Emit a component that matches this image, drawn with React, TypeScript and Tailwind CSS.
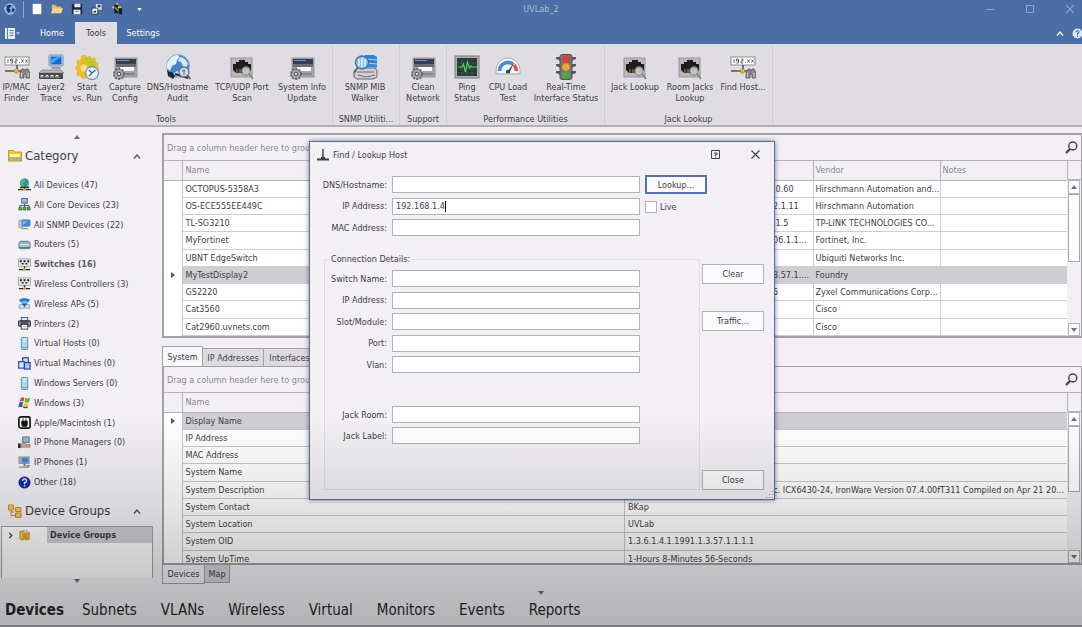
import React from 'react';

const BoxIcon = ({ children, className = 'w-[26px] h-[26px]' }: { children: React.ReactNode; className?: string }) => (
  <svg viewBox="0 0 26 26" className={`shrink-0 ${className}`} fill="none" aria-hidden="true">
    {children}
  </svg>
);

const SmallIcon = ({ children, className = 'w-[13px] h-[13px]' }: { children: React.ReactNode; className?: string }) => (
  <svg viewBox="0 0 14 14" className={`shrink-0 ${className}`} fill="none" aria-hidden="true">
    {children}
  </svg>
);

/* Ribbon icons */

const FinderIcon = () => (
  <BoxIcon>
    <rect x="1" y="3" width="24" height="8" fill="#fff" stroke="#8b898f" />
    <path d="M4 5v4M6.500 9h2v-4h-2v2h2M11 5h2v2h-2v2h2M15 8.500h1M17.500 5.500l2 3M19.500 5.500l-2 3M21.500 5.500l2 3M23.500 5.500l-2 3" stroke="#444" strokeWidth="0.800" />
    <path d="M13 11v5M1 17h18" stroke="#55535a" strokeWidth="1.600" />
    <circle cx="12.500" cy="17" r="2.200" fill="#f0b929" stroke="#a07818" strokeWidth="0.600" />
    <path d="M16 24v-5l2-4h2l1 2 1-2h2l2 4v5h-4v-4h-2v4z" fill="#8b898f" stroke="#55535a" strokeWidth="0.800" />
    <path d="M17.500 19v4M24 19v4" stroke="#d5d3d8" />
  </BoxIcon>
);

const LayerIcon = () => (
  <BoxIcon>
    <rect x="11" y="1" width="14" height="11" rx="1" fill="#cfd8e6" stroke="#7e8ca5" />
    <rect x="12.500" y="2.500" width="11" height="8" fill="#1168d8" />
    <path d="M12.500 10.500v-5l8-3h3z" fill="#49a2f8" />
    <path d="M14 13h8l1 2h-10z" fill="#9a9ba2" />
    <path d="M4 16h19l3 3H1z" fill="#b9b7bd" stroke="#706e75" strokeWidth="0.600" />
    <rect x="1" y="19" width="24" height="6" fill="#4b4a50" />
    <path d="M3 23.500v-2h2v2M8 23.500v-2h2v2M13 23.500v-2h2v2M18 23.500v-2h2v2" stroke="#f3f3f3" />
  </BoxIcon>
);

const StartIcon = () => (
  <BoxIcon>
    <path d="M11 1l2 3 3-2 1 3 4-1v4l3 1-1 4 2 3-3 2v3l-4 1-2 3-3-2-4 2-2-3-4-1 1-4-3-3 3-3-1-4 4-1 1-4z" fill="#f5bc1d" stroke="#dca017" strokeWidth="0.600" />
    <path d="M12 2l2 3 3-1 1 3 4 0-2 5-9 1-3-4z" fill="#a9c934" opacity="0.750" />
    <circle cx="10" cy="14" r="3.500" fill="#fbe08a" />
    <circle cx="18" cy="19" r="6.500" fill="#e9f1f8" stroke="#7793b2" strokeWidth="1.300" />
    <path d="M15 16l3 3 3.500-3M18 19l-3 3" stroke="#38588b" strokeWidth="1.100" />
  </BoxIcon>
);

const ConfigIcon = () => (
  <BoxIcon>
    <rect x="3" y="4" width="22" height="19" fill="#a5a4aa" stroke="#97959c" />
    <rect x="4" y="5" width="20" height="5" fill="#36404f" />
    <path d="M5 6.500h12" stroke="#5e93d8" />
    <rect x="4" y="10" width="20" height="3" fill="#6b6d76" />
    <rect x="8" y="13" width="14" height="4" fill="#f8f8fa" />
    <path d="M5 20h18" stroke="#7b7a81" strokeWidth="1.500" />
    <circle cx="7" cy="20" r="5" fill="#8e8d93" stroke="#67666c" strokeWidth="2" strokeDasharray="2 1.200" />
    <circle cx="7" cy="20" r="4" fill="#a7a6ac" />
    <circle cx="7" cy="20" r="1.800" fill="#e1dfe4" stroke="#4e4d53" />
  </BoxIcon>
);

const GlobeAuditIcon = () => (
  <BoxIcon>
    <circle cx="13" cy="12" r="11.500" fill="#3f86cf" stroke="#98b4d2" />
    <path d="M4 6q3-5 9-5 3 2-1 5l-1 4-4 2-2 5-3-3q-1-5 2-8z" fill="#e4eef7" />
    <path d="M15 3q6 1 8 7l-2 4-3-2-2-4-3-1z" fill="#d6e7f5" />
    <path d="M8 20l4-3 4 2-1 4q-4 1-7-3z" fill="#c2d8ec" />
    <path d="M2 16q3 3 5 2l3 4-2 3-5-3z" fill="#1d2631" />
    <path d="M10 20l13 4" stroke="#1f2530" strokeWidth="2" />
    <circle cx="19" cy="18" r="5" fill="#cfdbe6" stroke="#6e7782" strokeWidth="1.300" />
    <path d="M19 15v6M17 17h3" stroke="#55728f" />
    <path d="M22.500 21.500l3 3.500" stroke="#50555c" strokeWidth="1.800" />
  </BoxIcon>
);

const JackIcon = () => (
  <BoxIcon>
    <rect x="2" y="4" width="21" height="19" fill="#b9b7bd" stroke="#97959b" />
    <path d="M4 16v-6h3V8h3V6h6v2h3v2h3v6l-3 3H7z" fill="#1e1c1d" />
    <path d="M8 15v4M11 15v4M14 15v4" stroke="#a5863d" strokeWidth="1.200" />
    <circle cx="17" cy="17" r="4" fill="#d9dadd" fillOpacity="0.850" stroke="#8b8990" strokeWidth="1.300" />
    <path d="M20 20l4 5" stroke="#8b7f76" strokeWidth="1.800" />
  </BoxIcon>
);

const MibIcon = () => (
  <BoxIcon>
    <path d="M13 1h9l3 2v12H13z" fill="#2f83d8" />
    <path d="M13 5l12 1M13 9l12 1M13 13l12 1" stroke="#a9d5fa" strokeWidth="1.100" />
    <path d="M2 17l4-3h17l2 3v6l-4 2H5l-3-2z" fill="#cfcfd4" stroke="#66666d" />
    <path d="M5 18h17M6 21l8 2 9-2" stroke="#6e6e76" />
    <circle cx="10" cy="8.500" r="6.500" fill="#88c2ec" stroke="#3f6f9e" strokeWidth="1.300" />
    <path d="M7 5v7M10 4v9M13 5v7" stroke="#edf7ff" strokeWidth="1.300" />
    <path d="M6 13l-4 6" stroke="#5b6978" strokeWidth="2" />
  </BoxIcon>
);

const PingIcon = () => (
  <BoxIcon>
    <rect x="1" y="2" width="24" height="22" fill="#b0b1b5" stroke="#7b7c80" />
    <rect x="3" y="4" width="20" height="18" fill="#2c3a35" />
    <path d="M3 9h20M3 14h20M3 19h20M8 4v18M13 4v18M18 4v18" stroke="#45594f" strokeWidth="0.600" />
    <path d="M4 13h4l1.500-3 2 8 2-10 2 6 1.500-2 1 1h5" stroke="#3ddc58" strokeWidth="1.200" />
  </BoxIcon>
);

const GaugeIcon = () => (
  <BoxIcon>
    <path d="M1 20v-4a12 12 0 0 1 24 0v4z" fill="#f5f6f9" stroke="#a9aeb8" />
    <path d="M4.500 17a8.500 8.500 0 0 1 14-6.500" stroke="#4a8ed6" strokeWidth="3.600" />
    <path d="M19 11a8.500 8.500 0 0 1 2.500 6" stroke="#dc5548" strokeWidth="3.600" />
    <path d="M12 18l7-9-5 10z" fill="#293447" />
    <circle cx="13" cy="18" r="2.200" fill="#38435a" />
    <path d="M2 20h22" stroke="#b7c4d8" strokeWidth="1.600" />
  </BoxIcon>
);

const TrafficLightIcon = () => (
  <BoxIcon>
    <path d="M3 3h5v4L3 5zM3 10h5v4l-5-2zM3 17h5v4l-5-2zM23 3h-5v4l5-2zM23 10h-5v4l5-2zM23 17h-5v4l5-2z" fill="#5b5b5f" />
    <rect x="7" y="0.500" width="12" height="25" rx="2" fill="#77777c" stroke="#55555a" />
    <circle cx="13" cy="5" r="3.700" fill="#e8392d" />
    <circle cx="13" cy="13" r="3.700" fill="#f2a52b" />
    <circle cx="13" cy="21" r="3.700" fill="#53a83e" />
  </BoxIcon>
);

/* Category icons */

const GlobeIcon = () => (
  <SmallIcon>
    <circle cx="7" cy="5.500" r="5" fill="#2b84c8" />
    <path d="M4 1.500q4-1 4 2L6 6l1 3-3-1-2-3zM9 5l3-1-1 4-2 1z" fill="#4fc24a" />
    <path d="M2 9.500h10v1.500H2z" fill="#2c3033" />
    <path d="M0 12.500h14M7 10v3" stroke="#2c3033" strokeWidth="1.200" />
    <rect x="5.500" y="11.500" width="3" height="2" fill="#e1b32e" />
  </SmallIcon>
);

const CoreIcon = () => (
  <SmallIcon>
    <rect x="4" y="0.500" width="6" height="5" fill="#9cb8e8" stroke="#46609c" />
    <path d="M7 6v2M2 10V8h10v2M7 8v2" stroke="#44516e" />
    <path d="M1 10h3v3H1zM5.500 10h3v3h-3zM10 10h3v3h-3z" fill="#5faf44" stroke="#31682a" strokeWidth="0.800" />
  </SmallIcon>
);

const SnmpIcon = () => (
  <SmallIcon>
    <path d="M1 3l4-1v9l-4-1z" fill="#c8ccd4" stroke="#75808f" strokeWidth="0.700" />
    <rect x="4" y="2" width="9" height="7" rx="1" fill="#2f86dc" stroke="#8094ad" />
    <path d="M5 8V4l6-1z" fill="#82c1f8" />
    <path d="M3 12q5-3 9 0z" fill="#8f98a6" />
  </SmallIcon>
);

const RouterIcon = () => (
  <SmallIcon>
    <path d="M1 6q0-2 2-2.500h8q2 .5 2 2.500v4q0 1.500-1.500 1.500h-9Q1 11.500 1 10z" fill="#93b3cf" stroke="#5f7588" />
    <path d="M1.500 7h11M2 9h10" stroke="#e0edf7" />
    <path d="M1 10h12" stroke="#526170" />
  </SmallIcon>
);

const SwitchIcon = () => (
  <SmallIcon>
    <rect x="0.500" y="1" width="13" height="8" fill="#e4e4e6" stroke="#8f8f94" strokeWidth="0.700" />
    <path d="M2 2.500h2v2H2zM6 2.500h2v2H6zM10 2.500h2v2h-2zM4 5.500h2V7H4zM8 5.500h2V7H8z" fill="#1f1f22" />
    <path d="M7 9v3M1 12.500h12" stroke="#252528" strokeWidth="1.400" />
    <rect x="5.500" y="11" width="3" height="2.500" fill="#e3ac25" />
  </SmallIcon>
);

const ApIcon = () => (
  <SmallIcon>
    <path d="M1 3q6-4 12 0l-2 3H3z" fill="#2b7bd4" />
    <path d="M4 5q3-2 6 0l-1 3H5z" fill="#70bdf6" />
    <path d="M2 8h10l1 4H1z" fill="#dde3ea" stroke="#74808e" strokeWidth="0.700" />
    <path d="M4 7l3 4 3-4z" fill="#1d62b5" />
  </SmallIcon>
);

const PrinterIcon = () => (
  <SmallIcon>
    <rect x="3.500" y="0.500" width="7" height="4" fill="#dbeafa" stroke="#4c6178" />
    <rect x="0.500" y="4" width="13" height="6" rx="1" fill="#4b5563" stroke="#2b3037" />
    <path d="M2 5v4M12 5v4" stroke="#c7ced6" />
    <rect x="3.500" y="8" width="7" height="5" fill="#fff" stroke="#39434e" />
    <path d="M5 10.500h4" stroke="#6faadf" />
  </SmallIcon>
);

const ServerIcon = () => (
  <SmallIcon>
    <rect x="3.500" y="0.500" width="7" height="13" rx="1" fill="#a9d2e4" stroke="#5f8ca5" />
    <path d="M5 2.500h4M5 4.500h4" stroke="#e9f6fc" />
    <path d="M5 11.500h4" stroke="#6f9db5" />
  </SmallIcon>
);

const VmIcon = () => (
  <SmallIcon>
    <rect x="5" y="0.800" width="6" height="8" fill="#cfe1ff" stroke="#2348a8" strokeWidth="1.300" />
    <rect x="0.800" y="5" width="6" height="7" fill="#dfeaff" stroke="#2348a8" strokeWidth="1.300" />
    <rect x="7" y="6" width="6" height="7" fill="#a9c6fa" stroke="#2348a8" strokeWidth="1.300" />
  </SmallIcon>
);

const WindowsIcon = () => (
  <SmallIcon>
    <path d="M3 2q2-1.500 4 0L6 6Q4 5 2 6z" fill="#e04a2c" />
    <path d="M8 2q2 1.500 5 0l-1 4.500Q9 8 7 6.500z" fill="#62b33c" />
    <path d="M1.500 7q2-1.500 4 0l-1 4.500q-2-1-4 0z" fill="#2a5fc5" />
    <path d="M6.500 7.500q2 1.500 5 0l-1 4.500q-3 1.500-5 0z" fill="#f0bd2a" />
    <path d="M0.500 11.500q2-1 4 0M5.500 12q3 1.500 5 0" stroke="#2f2430" />
  </SmallIcon>
);

const MacIcon = () => (
  <SmallIcon>
    <rect x="1" y="1" width="12" height="12" rx="2" fill="#f4f4f4" stroke="#161616" strokeWidth="1.800" />
    <path d="M3.500 6q1-1.500 2-1.500t1.500.5q1-.5 2-.5t1.500 1.500v3l-1 2.500h-5l-1-2.500z" fill="#161616" />
    <path d="M5.500 4V2.500M8.500 4V2.500" stroke="#161616" />
  </SmallIcon>
);

const ManagerIcon = () => (
  <SmallIcon>
    <rect x="5" y="1" width="7" height="6" fill="#86b5e4" stroke="#64758b" />
    <path d="M0 8h3v5H0z" fill="#2b3038" />
    <path d="M3 9q4-2 6 0h4v3H3z" fill="#d3a988" stroke="#7e6a5d" strokeWidth="0.700" />
  </SmallIcon>
);

const PhoneIcon = () => (
  <SmallIcon>
    <rect x="1" y="1" width="11" height="7" fill="#aab6c4" stroke="#8d98a5" />
    <rect x="4" y="2" width="7" height="5" fill="#3c88cc" />
    <path d="M7 8v3" stroke="#6f7c8b" strokeWidth="2" />
    <path d="M1 12h11M9 10.500h4" stroke="#8c949e" strokeWidth="1.500" />
  </SmallIcon>
);

const OtherIcon = () => (
  <SmallIcon>
    <circle cx="7" cy="7" r="6" fill="#1430b8" stroke="#0d2080" />
    <path d="M4.800 5.200q.2-2 2.200-2t2.200 1.800q0 1.300-2.200 2.200V9M7 10v1.300" stroke="#fff" strokeWidth="1.400" />
  </SmallIcon>
);

const FolderIcon = () => (
  <SmallIcon className="w-[14px] h-[14px]">
    <path d="M0.500 1.500h5l1 1.500h7v9h-13z" fill="#f4c637" stroke="#cc9b20" />
    <path d="M2 5h10v3H2z" fill="#fdf0ac" />
    <path d="M2 12.500V9h10v3.500M5 9v2h4V9" stroke="#7da7a4" strokeWidth="1.200" />
  </SmallIcon>
);

const GroupsIcon = () => (
  <SmallIcon className="w-[14px] h-[14px]">
    <path d="M0.500 1h5v5h-5zM7.500 3.500H13v4H7.500zM7.500 9H13v4.500H7.500z" fill="#f2cb54" stroke="#c3942a" />
    <path d="M3 6v5.500h4M3 8h3" stroke="#b88d3a" />
  </SmallIcon>
);

const LockIcon = () => (
  <SmallIcon className="w-[12px] h-[14px]">
    <path d="M1 3l5-1v10l-3 1-2-2zM8 4h4v8l-4 1z" fill="#e9b42a" stroke="#a97b15" strokeWidth="0.700" />
    <path d="M6 12h3V5H6z" fill="#d99f1c" />
    <path d="M5.500 5q0-4 4-3v3" stroke="#c5cdd6" strokeWidth="1.500" />
    <path d="M3 4v7" stroke="#fbe697" />
  </SmallIcon>
);

const ribbon = [
  {
    title: 'Tools',
    width: 'w-[333px]',
    items: [
      { label: ['IP/MAC', 'Finder'], icon: <FinderIcon />, width: 'w-[33px]' },
      { label: ['Layer2', 'Trace'], icon: <LayerIcon />, width: 'w-[36px]' },
      { label: ['Start', 'vs. Run'], icon: <StartIcon />, width: 'w-[36px]' },
      { label: ['Capture', 'Config'], icon: <ConfigIcon />, width: 'w-[40px]' },
      { label: ['DNS/Hostname', 'Audit'], icon: <GlobeAuditIcon />, width: 'w-[65px]' },
      { label: ['TCP/UDP Port', 'Scan'], icon: <JackIcon />, width: 'w-[64px]' },
      { label: ['System Info', 'Update'], icon: <ConfigIcon />, width: 'w-[56px]' },
    ],
  },
  { title: 'SNMP Utiliti...', width: 'w-[67px]', items: [{ label: ['SNMP MIB', 'Walker'], icon: <MibIcon />, width: 'w-[64px]' }] },
  { title: 'Support', width: 'w-[47px]', items: [{ label: ['Clean', 'Network'], icon: <ConfigIcon />, width: 'w-[46px]' }] },
  {
    title: 'Performance Utilities',
    width: 'w-[158px]',
    items: [
      { label: ['Ping', 'Status'], icon: <PingIcon />, width: 'w-[40px]' },
      { label: ['CPU Load', 'Test'], icon: <GaugeIcon />, width: 'w-[42px]' },
      { label: ['Real-Time', 'Interface Status'], icon: <TrafficLightIcon />, width: 'w-[74px]' },
    ],
  },
  {
    title: 'Jack Lookup',
    width: 'w-[168px]',
    items: [
      { label: ['Jack Lookup'], icon: <JackIcon />, width: 'w-[60px]' },
      { label: ['Room Jacks', 'Lookup'], icon: <JackIcon />, width: 'w-[50px]' },
      { label: ['Find Host...'], icon: <FinderIcon />, width: 'w-[56px]' },
    ],
  },
];

const categories = [
  { name: 'All Devices (47)', icon: <GlobeIcon /> },
  { name: 'All Core Devices (23)', icon: <CoreIcon /> },
  { name: 'All SNMP Devices (22)', icon: <SnmpIcon /> },
  { name: 'Routers (5)', icon: <RouterIcon /> },
  { name: 'Switches (16)', icon: <SwitchIcon />, active: true },
  { name: 'Wireless Controllers (3)', icon: <SwitchIcon /> },
  { name: 'Wireless APs (5)', icon: <ApIcon /> },
  { name: 'Printers (2)', icon: <PrinterIcon /> },
  { name: 'Virtual Hosts (0)', icon: <ServerIcon /> },
  { name: 'Virtual Machines (0)', icon: <VmIcon /> },
  { name: 'Windows Servers (0)', icon: <ServerIcon /> },
  { name: 'Windows (3)', icon: <WindowsIcon /> },
  { name: 'Apple/Macintosh (1)', icon: <MacIcon /> },
  { name: 'IP Phone Managers (0)', icon: <ManagerIcon /> },
  { name: 'IP Phones (1)', icon: <PhoneIcon /> },
  { name: 'Other (18)', icon: <OtherIcon /> },
];

const devices = [
  ['OCTOPUS-5358A3', '.0.60', 'Hirschmann Automation and...'],
  ['OS-ECE555EE449C', '2.1.11', 'Hirschmann Automation'],
  ['TL-SG3210', '.1.5', 'TP-LINK TECHNOLOGIES CO...'],
  ['MyFortinet', '06.1.1...', 'Fortinet, Inc.'],
  ['UBNT EdgeSwitch', '', 'Ubiquiti Networks Inc.'],
  ['MyTestDisplay2', '3.57.1....', 'Foundry'],
  ['GS2220', '5', 'Zyxel Communications Corp...'],
  ['Cat3560', '', 'Cisco'],
  ['Cat2960.uvnets.com', '', 'Cisco'],
];

const properties = [
  ['Display Name', ''],
  ['IP Address', ''],
  ['MAC Address', ''],
  ['System Name', ''],
  ['System Description', 'c. ICX6430-24, IronWare Version 07.4.00fT311 Compiled on Apr 21 20...'],
  ['System Contact', 'BKap'],
  ['System Location', 'UVLab'],
  ['System OID', '1.3.6.1.4.1.1991.1.3.57.1.1.1.1'],
  ['System UpTime', '1-Hours 8-Minutes 56-Seconds'],
];

const modules = ['Subnets', 'VLANs', 'Wireless', 'Virtual', 'Monitors', 'Events', 'Reports'];

const Triangle = ({ up = false }: { up?: boolean }) => (
  <svg viewBox="0 0 6 4" className="w-[6px] h-[4px]" aria-hidden="true">
    <path d={up ? 'M0 4l3-4 3 4z' : 'M0 0l3 4 3-4z'} fill="#716f76" />
  </svg>
);

const Chevron = ({ className }: { className: string }) => (
  <svg viewBox="0 0 8 5" className={`w-[8px] h-[5px] ${className}`} fill="none" stroke="currentColor" strokeWidth="1.300" aria-hidden="true">
    <path d="M1 4.500l3-3.500 3 3.500" />
  </svg>
);

const RowMarker = () => (
  <svg viewBox="0 0 4 6" className="w-[4px] h-[6px] mx-auto" aria-hidden="true">
    <path d="M0 0l4 3-4 3z" fill="#55535a" />
  </svg>
);

const SearchIcon = () => (
  <svg viewBox="0 0 13 13" className="w-[13px] h-[13px]" fill="none" stroke="#3f3d43" aria-hidden="true">
    <circle cx="7.800" cy="5" r="4" strokeWidth="1.400" />
    <path d="M5 8L1 12" strokeWidth="2.200" />
  </svg>
);

const GroupRow = () => (
  <div className="h-[26px] shrink-0 flex items-center justify-between px-[3px] border-b border-[#b5b3b8] text-[#8b898f]">
    <span>Drag a column header here to group</span>
    <button aria-label="Search"><SearchIcon /></button>
  </div>
);

const ScrollBar = ({ thumb }: { thumb: string }) => (
  <div className="w-[14px] shrink-0 flex flex-col">
    <div className="h-[19px] shrink-0 border-l border-b border-[#b5b3b8]"></div>
    <div className="flex-1 min-h-0 flex flex-col items-center px-px">
      <button aria-label="Scroll up" className="w-full h-[14px] shrink-0 bg-white border border-[#b5b3b8] flex items-center justify-center">
        <Triangle up />
      </button>
      <div className={`w-full bg-white border border-[#a9a7ad] ${thumb}`}></div>
      <button aria-label="Scroll down" className="w-full h-[13px] shrink-0 mt-auto bg-white border border-[#b5b3b8] flex items-center justify-center">
        <Triangle />
      </button>
    </div>
  </div>
);

const TitleBar = () => (
  <div className="bg-[#4a6ea5] text-white shrink-0">
    <div className="h-[22px] grid grid-cols-3 items-start">
      <div className="flex items-center h-[18px] pl-1">
        <SmallIcon className="w-[12px] h-[12px]">
          <circle cx="7" cy="7" r="6" fill="#7fa3d8" stroke="#c6d6ee" />
          <path d="M3 3q4-2 6 0L6 6l2 3-3 3-2-4zM10 6l3 1-2 4-2-2z" fill="#1d3768" />
        </SmallIcon>
        <span className="w-px h-[17px] bg-[#8fa8cf] ml-[7px] mr-[7px]"></span>
        <div className="flex items-center gap-2">
          <SmallIcon className="w-[12px] h-[12px]"><path d="M2 1h10v12H2z" fill="#fff" /></SmallIcon>
          <SmallIcon className="w-[12px] h-[12px]"><path d="M1 2h4l1 2h6v3H1z" fill="#e9b45a" /><path d="M0 12l2-6h12l-2 6z" fill="#f8d48c" /></SmallIcon>
          <SmallIcon className="w-[12px] h-[12px]"><path d="M1 1h12v12H1z" fill="#1d2c48" /><path d="M4 1h7v4H4zM3 8h8v5H3z" fill="#e8edf5" /><path d="M5 10h4" stroke="#5475a8" /></SmallIcon>
          <SmallIcon className="w-[12px] h-[12px]"><path d="M5 0.500h8v8H5z" fill="#dce5f3" stroke="#3a5487" /><path d="M1 6h7v7H1z" fill="#f4f7fb" stroke="#24375c" /><path d="M8 2h3v3H8zM3 9h3v2H3z" fill="#24375c" /></SmallIcon>
          <SmallIcon className="w-[12px] h-[12px]"><path d="M7 0v5M1 5h11" stroke="#e9c53c" strokeWidth="2" /><path d="M4 2h4v10H4zM9 6h4v7H9z" fill="#161d20" /><path d="M5 5l3 4" stroke="#8fb84c" strokeWidth="1.500" /></SmallIcon>
        </div>
        <button aria-label="Customize toolbar" className="ml-[14px]">
          <svg viewBox="0 0 6 4" className="w-[5px] h-[3px]"><path d="M0 0l3 4 3-4z" fill="#fff" /></svg>
        </button>
      </div>
      <div className="text-center leading-[18px] text-[#a9bcdb]">UVLab_2</div>
      <div className="flex items-center justify-end h-[18px] gap-8 pr-2 text-[#8ba5cf]">
        <button aria-label="Minimize"><svg viewBox="0 0 8 8" className="w-[8px] h-[8px]"><path d="M0 4.500h8" stroke="currentColor" /></svg></button>
        <button aria-label="Maximize"><svg viewBox="0 0 8 8" className="w-[8px] h-[8px]" fill="none"><path d="M.5.5h7v7h-7z" stroke="currentColor" /></svg></button>
        <button aria-label="Close window"><svg viewBox="0 0 8 8" className="w-[8px] h-[8px]"><path d="M0 0l8 8M8 0L0 8" stroke="currentColor" strokeWidth="1.200" /></svg></button>
      </div>
    </div>
    <div className="h-[22px] flex items-stretch">
      <button aria-label="Application menu" className="w-[29px] flex items-center gap-px pl-[5px]">
        <svg viewBox="0 0 10 11" className="w-[10px] h-[11px]" fill="none"><path d="M0 0h10v11H0z" fill="#e9eef6" /><path d="M2.500 0v11M4.500 2.500h4M4.500 5h4M4.500 7.500h4" stroke="#5d7ba8" /></svg>
        <svg viewBox="0 0 6 4" className="w-[4px] h-[3px]"><path d="M0 0l3 4 3-4z" fill="#b9c8e0" /></svg>
      </button>
      <button className="w-[46px]">Home</button>
      <button className="w-[42px] bg-[#e0dde2] text-[#3a383e]">Tools</button>
      <button className="w-[52px]">Settings</button>
      <div className="ml-auto flex items-center gap-2">
        <Chevron className="text-white" />
        <SmallIcon className="w-[11px] h-[11px] -mr-px">
          <circle cx="7" cy="7" r="6.300" fill="#dbe6f6" />
          <path d="M5 5.500q0-2 2-2t2 1.500q0 1-2 2V9M7 10v1.300" stroke="#365d9c" strokeWidth="1.300" />
        </SmallIcon>
      </div>
    </div>
  </div>
);

const Ribbon = () => (
  <div className="h-[83px] shrink-0 flex bg-[#e0dde2] border-b-2 border-[#b3b1b6]">
    {ribbon.map((group) => (
      <div key={group.title} className={`flex flex-col shrink-0 pt-2 border-r border-[#cfccd2] ${group.width}`}>
        <div className="flex flex-1 justify-start">
          {group.items.map((item) => (
            <button key={item.label[0]} className={`flex flex-col items-center shrink-0 leading-[11px] whitespace-nowrap ${item.width}`}>
              <span className="h-[30px] flex items-center justify-center">{item.icon}</span>
              {item.label.map((line) => (
                <span key={line}>{line}</span>
              ))}
            </button>
          ))}
        </div>
        <div className="text-center leading-3">{group.title}</div>
      </div>
    ))}
  </div>
);

const Sidebar = () => (
  <div className="w-[162px] shrink-0 flex flex-col">
    <div className="h-[17px] flex justify-center pr-2 pt-2"><Triangle up /></div>
    <div className="h-6 flex items-center pl-2 pr-[21px]">
      <FolderIcon />
      <h2 className="ml-[3px] text-[13px]">Category</h2>
      <Chevron className="ml-auto text-[#55535a]" />
    </div>
    <ul className="h-[317px] mt-[7px] flex flex-col">
      {categories.map((item) => (
        <li key={item.name} className="flex-1 min-h-0 flex items-center gap-[3px] pl-[18px]">
          {item.icon}
          <a href="#devices" className={item.active ? 'font-bold text-[#5c5a61]' : ''}>{item.name}</a>
        </li>
      ))}
    </ul>
    <div className="h-6 mt-[7px] flex items-center pl-2 pr-[21px]">
      <GroupsIcon />
      <h2 className="ml-[3px] text-[13px]">Device Groups</h2>
      <Chevron className="ml-auto text-[#55535a]" />
    </div>
    <div className="h-[52px] mt-[3px] ml-px mr-[9px] border border-b-0 border-[#a3a1a7] bg-[#fcfcfd]">
      <div className="flex items-center h-4">
        <svg viewBox="0 0 5 8" className="w-[5px] h-[7px] ml-[6px] mr-[6px]" fill="none"><path d="M1 1l3 3-3 3" stroke="#333" strokeWidth="1.400" /></svg>
        <LockIcon />
        <span className="ml-4 pl-[3px] flex-1 h-full bg-[#cfcdd2] font-bold leading-4">Device Groups</span>
      </div>
    </div>
    <div className="flex justify-center pr-2 pt-px"><Triangle /></div>
  </div>
);

const DeviceGrid = () => (
  <section className="shrink-0 border-2 border-r border-[#a3a1a7]">
    <GroupRow />
    <div className="flex">
      <table className="flex-1 h-[175px] table-fixed w-full border-collapse text-left">
        <colgroup>
          <col className="w-[18px]" />
          <col />
          <col className="w-[44px]" />
          <col className="w-[127px]" />
          <col className="w-[127px]" />
        </colgroup>
        <thead>
          <tr className="h-[19px] text-[#8b898f] border-b border-[#b5b3b8]">
            <th className="border-r border-[#b5b3b8]"></th>
            <th className="font-normal px-[3px]">Name</th>
            <th className="border-r border-[#b5b3b8]"></th>
            <th className="font-normal px-[2px] border-r border-[#b5b3b8]">Vendor</th>
            <th className="font-normal px-[2px]">Notes</th>
          </tr>
        </thead>
        <tbody>
          {devices.map(([name, oid, vendor]) => {
            const selected = name === 'MyTestDisplay2';
            return (
              <tr key={name} className={selected ? 'bg-[#d0ced2]' : 'bg-white'}>
                <td className="border-r border-[#c9c7cc] bg-white">{selected && <RowMarker />}</td>
                <td className="px-[3px] border-b border-[#cfcdd2] whitespace-nowrap">{name}</td>
                <td className="pl-1 border-b border-r border-[#cfcdd2] whitespace-nowrap">{oid}</td>
                <td className="px-[2px] border-b border-r border-[#cfcdd2] whitespace-nowrap">{vendor}</td>
                <td className="border-b border-[#cfcdd2]"></td>
              </tr>
            );
          })}
        </tbody>
      </table>
      <ScrollBar thumb="h-[68px]" />
    </div>
  </section>
);

const PropertyGrid = () => (
  <section className="flex-1 min-h-0 flex flex-col border-2 border-r border-t border-[#a3a1a7] overflow-hidden">
    <GroupRow />
    <div className="flex flex-1 min-h-0">
      <div className="flex-1 min-h-0 overflow-hidden">
        <table className="h-[175px] table-fixed w-full border-collapse text-left">
          <colgroup>
            <col className="w-[18px]" />
            <col />
            <col />
          </colgroup>
          <thead>
            <tr className="h-[19px] text-[#8b898f] border-b border-[#b5b3b8]">
              <th className="border-r border-[#b5b3b8]"></th>
              <th className="font-normal px-[3px] border-r border-[#b5b3b8]">Name</th>
              <th className="font-normal px-[3px]">Value</th>
            </tr>
          </thead>
          <tbody>
            {properties.map(([name, value], i) => (
              <tr key={name} className={i === 0 ? 'bg-[#d0ced2]' : 'bg-white'}>
                <td className="border-r border-[#c9c7cc] bg-white">{i === 0 && <RowMarker />}</td>
                <td className="px-[3px] border-b border-r border-[#c9c7cc] whitespace-nowrap">{name}</td>
                <td className={`px-[3px] border-b border-[#c9c7cc] whitespace-nowrap ${value.startsWith('c.') ? 'text-right' : ''}`}>{value}</td>
              </tr>
            ))}
          </tbody>
        </table>
      </div>
      <ScrollBar thumb="h-[66px]" />
    </div>
  </section>
);

const Field = ({ id, label, value = '' }: { id: string; label: string; value?: string }) => (
  <div className="flex items-center h-[17px]">
    <label htmlFor={id} className="w-[80px] text-right pr-[5px] whitespace-nowrap">{label}</label>
    <input id={id} defaultValue={value} className="block w-[248px] h-[17px] px-[3px] bg-white border border-[#b3b1b6] outline-none" />
  </div>
);

const DialogButton = ({ children, className = '' }: { children: React.ReactNode; className?: string }) => (
  <button className={`w-[62px] h-5 bg-[#fbfafc] border border-[#b3b1b6] ${className}`}>{children}</button>
);

const LookupDialog = () => (
  <div role="dialog" aria-label="Find / Lookup Host" className="absolute left-[309px] top-[141px] w-[466px] h-[359px] bg-[#f2f0f4] border border-[#5b6d9c] shadow-[0_0_5px_rgba(40,40,70,0.6)] flex flex-col">
    <div className="h-[25px] flex items-center pl-[7px] pr-[14px]">
      <svg viewBox="0 0 12 12" className="w-[12px] h-[12px]" fill="none" aria-hidden="true">
        <path d="M6 0v8" stroke="#3d3c42" strokeWidth="1.400" />
        <path d="M0 10.500h12M4 9h4" stroke="#3d3c42" strokeWidth="2" />
      </svg>
      <span className="ml-1">Find / Lookup Host</span>
      <button aria-label="Help" className="ml-auto">
        <svg viewBox="0 0 9 9" className="w-[9px] h-[9px]" fill="none" stroke="#45434a"><path d="M.5.5h8v8h-8zM3 3h3v1.500H4.500V6M4.500 6.500v1" /></svg>
      </button>
      <button aria-label="Close dialog" className="ml-[31px]">
        <svg viewBox="0 0 9 9" className="w-[9px] h-[9px]" stroke="#45434a" strokeWidth="1.200"><path d="M.5.5l8 8M8.500.5l-8 8" /></svg>
      </button>
    </div>
    <div className="flex pt-[9px] pl-[2px]">
      <div className="h-[60px] flex flex-col justify-between">
        <Field id="hostname" label="DNS/Hostname:" />
        <div className="relative">
          <Field id="ip" label="IP Address:" value="192.168.1.4" />
          <span className="absolute left-[133px] top-[3px] w-px h-[11px] bg-black"></span>
        </div>
        <Field id="mac" label="MAC Address:" />
      </div>
      <div className="flex flex-col pl-[5px]">
        <button className="w-[62px] h-[19px] -mt-px bg-[#fbfafc] border-2 border-[#5a71a8]">Lookup...</button>
        <label className="flex items-center gap-[3px] mt-[7px]">
          <input type="checkbox" className="appearance-none w-3 h-3 bg-white border border-[#b3b1b6]" />
          Live
        </label>
      </div>
    </div>
    <div className="flex pt-4 pl-[14px] gap-[2px]">
      <fieldset className="w-[376px] h-[238px] border border-[#dedce2]">
        <legend className="ml-[5px] px-px leading-[14px]">Connection Details:</legend>
        <div className="h-[103px] mt-1 -ml-[13px] flex flex-col justify-between">
          <Field id="switch" label="Switch Name:" />
          <Field id="switch-ip" label="IP Address:" />
          <Field id="slot" label="Slot/Module:" />
          <Field id="port" label="Port:" />
          <Field id="vlan" label="Vlan:" />
        </div>
        <div className="h-[38px] mt-[33px] -ml-[13px] flex flex-col justify-between">
          <Field id="jack-room" label="Jack Room:" />
          <Field id="jack-label" label="Jack Label:" />
        </div>
      </fieldset>
      <div className="flex flex-col pt-3">
        <DialogButton>Clear</DialogButton>
        <DialogButton className="mt-[27px]">Traffic...</DialogButton>
        <DialogButton className="mt-auto">Close</DialogButton>
      </div>
    </div>
    <svg viewBox="0 0 8 8" className="absolute right-0 bottom-0 w-[8px] h-[8px]" fill="#9a98a0" aria-hidden="true">
      <path d="M6 0h1v1H6zM3 3h1v1H3zM6 3h1v1H6zM0 6h1v1H0zM3 6h1v1H3zM6 6h1v1H6z" />
    </svg>
  </div>
);

const App = () => {
  return (
    <div className="relative h-screen flex flex-col overflow-hidden bg-[#f2f0f4] text-[#3f3d43] text-[9px] leading-3 font-['DejaVu_Sans_Condensed','DejaVu_Sans',sans-serif]">
      <TitleBar />
      <Ribbon />
      <div className="flex flex-1 min-h-0">
        <Sidebar />
        <div className="flex-1 min-w-0 flex flex-col pt-[6px]">
          <DeviceGrid />
          <div className="flex items-end mt-2 h-5 shrink-0">
            <button className="h-5 w-[41px] border border-b-0 border-[#a3a1a7] bg-[#f8f7f9]">System</button>
            <button className="h-[18px] w-[61px] border border-b-0 border-l-0 border-[#a3a1a7] bg-[#dddbe0]">IP Addresses</button>
            <button className="h-[18px] w-[52px] border border-b-0 border-l-0 border-[#a3a1a7] bg-[#dddbe0]">Interfaces</button>
          </div>
          <PropertyGrid />
          <div className="flex items-start h-[19px] shrink-0">
            <button className="h-[19px] w-[43px] border border-t-0 border-[#a3a1a7] bg-[#f2f0f4]">Devices</button>
            <button className="h-[18px] w-[25px] border border-t-0 border-l-0 border-[#a3a1a7] bg-[#d5d3d8]">Map</button>
          </div>
        </div>
      </div>
      <nav className="h-[43px] shrink-0 flex flex-col border-b-2 border-[#a9a7ad]">
        <div className="h-4 flex justify-center items-end pb-[5px]"><Triangle /></div>
        <div className="flex items-center gap-[18px] pl-[5px] text-[15px] leading-5 text-[#2a282d]">
          <a href="#devices" className="font-bold">Devices</a>
          <div className="flex gap-6">
            {modules.map((item) => (
              <a key={item} href={`#${item.toLowerCase()}`}>{item}</a>
            ))}
          </div>
        </div>
      </nav>
      <LookupDialog />
      {/* shade that deepens towards the bottom of the window */}
      <div className="absolute inset-x-0 bottom-0 h-[210px] pointer-events-none bg-[linear-gradient(to_bottom,transparent,rgba(0,0,0,0.1)_42%,rgba(0,0,0,0.19)_70%,rgba(0,0,0,0.26))]"></div>
    </div>
  );
};

export default App;
